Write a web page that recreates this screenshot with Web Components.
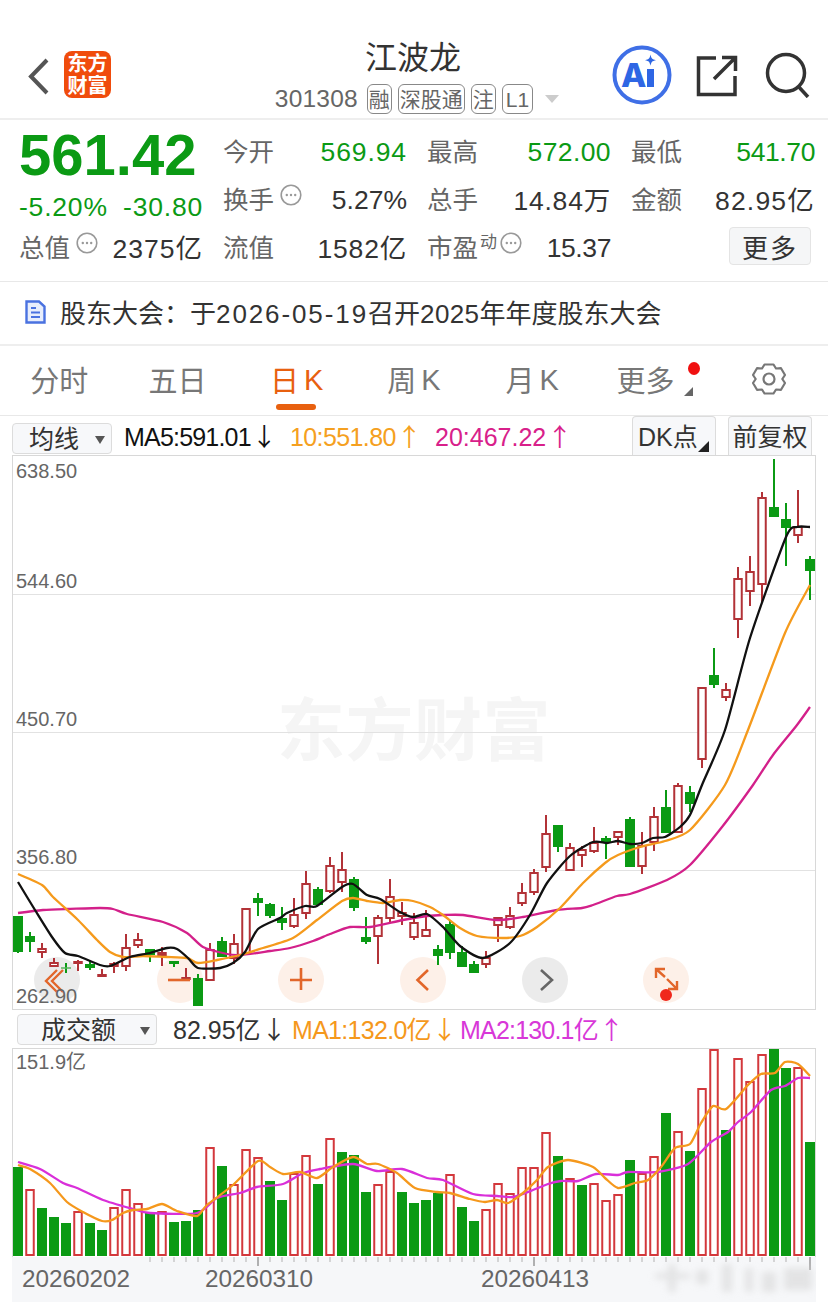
<!DOCTYPE html>
<html lang="zh"><head><meta charset="utf-8"><title>江波龙</title>
<style>
html,body{margin:0;padding:0;background:#fff}
body{width:828px;height:1302px;overflow:hidden;font-family:"Liberation Sans","Noto Sans CJK SC",sans-serif;color:#333}
</style></head><body>
<app-header></app-header>
<quote-panel></quote-panel>
<notice-bar>股东大会：于<b class="d">2026-05-19</b>召开<b class="y">2025</b>年年度股东大会</notice-bar>
<period-tabs></period-tabs>
<ma-bar></ma-bar>
<kline-chart></kline-chart>
<vol-bar></vol-bar>
<vol-chart></vol-chart>
<script>
const FONT='"Liberation Sans","Noto Sans CJK SC",sans-serif';
function def(name,html,init){
  customElements.define(name,class extends HTMLElement{
    constructor(){super();const s=this.attachShadow({mode:'open'});s.innerHTML=html;if(init)init(s,this);}
  });
}
function smooth(p){
  let d='M'+p[0][0]+' '+p[0][1];
  for(let i=0;i<p.length-1;i++){
    const a=p[Math.max(i-1,0)],b=p[i],c=p[i+1],e=p[Math.min(i+2,p.length-1)],k=.12;
    d+=`C${(b[0]+(c[0]-a[0])*k).toFixed(1)} ${(b[1]+(c[1]-a[1])*k).toFixed(1)} ${(c[0]-(e[0]-b[0])*k).toFixed(1)} ${(c[1]-(e[1]-b[1])*k).toFixed(1)} ${c[0]} ${c[1]}`;
  }
  return d;
}
const cx=i=>18+12*i;

def('tag-badge',`<style>:host{display:inline-flex;align-items:center;justify-content:center;box-sizing:border-box;height:30px;padding:0 1px;border:1px solid #888;border-radius:6px;font-size:21px;color:#666;line-height:1;background:#fff}</style><slot></slot>`);

def('app-header',`<style>
:host{display:flex;box-sizing:border-box;height:120px;border-bottom:2px solid #eee;position:relative;font-family:${FONT}}
.left{display:flex;align-items:flex-start;width:270px;padding:51px 0 0 26px;box-sizing:border-box;gap:14px}
.logo{width:47px;height:47px;border-radius:8px;background:#f04c0c;color:#fff;font-weight:700;font-size:20px;line-height:22px;text-align:center;display:flex;align-items:center;justify-content:center}
.mid{width:286px;display:flex;flex-direction:column;align-items:center;padding-top:39px;box-sizing:border-box}
.name{font-size:32px;line-height:38px;color:#333}
.sub{display:flex;align-items:center;gap:6px;margin:7px 0 0 8px;font-size:24.5px;color:#666;white-space:nowrap;height:30px}
.code{margin-right:3px;letter-spacing:.2px}
.tri{width:0;height:0;border-left:7px solid transparent;border-right:7px solid transparent;border-top:8px solid #ccc;margin-left:6px}
.right{flex:1;display:flex;align-items:flex-start;padding:45px 0 0 56px;box-sizing:border-box;gap:0}
</style>
<div class="left">
<svg width="24" height="38" viewBox="0 0 24 38" style="margin-top:6px"><path d="M21 3 5 19.5 21 36" fill="none" stroke="#555" stroke-width="4"/></svg>
<div class="logo">东方<br>财富</div></div>
<div class="mid"><div class="name">江波龙</div>
<div class="sub"><span class="code">301308</span><tag-badge>融</tag-badge><tag-badge>深股通</tag-badge><tag-badge>注</tag-badge><tag-badge style="font-family:'Liberation Sans';padding:0 3px">L1</tag-badge><span class="tri"></span></div></div>
<div class="right">
<svg width="60" height="60" viewBox="0 0 60 60"><circle cx="30" cy="30" r="27.5" fill="#fff" stroke="#3f6fe6" stroke-width="4"/><text x="9" y="42" font-family="Inter,'Liberation Sans'" font-weight="800" font-size="33" fill="#2e66e4">A</text><rect x="35" y="24" width="7" height="18" fill="#2e66e4"/><path d="M38.5 9.500C39.300 13.500 40 14.300 44 15.200 40 16 39.300 16.800 38.500 20.800 37.700 16.800 37 16 33 15.200 37 14.300 37.700 13.500 38.500 9.500Z" fill="#2e66e4"/></svg>
<svg width="42" height="42" viewBox="0 0 42 42" style="margin:10px 0 0 24px"><path d="M20 3H2.500V39.500H39V21" fill="none" stroke="#333" stroke-width="3.500"/><path d="M18 24 38 4M26 2.500H39.500V16" fill="none" stroke="#333" stroke-width="3.500"/></svg>
<svg width="46" height="46" viewBox="0 0 46 46" style="margin:7px 0 0 27px"><circle cx="21" cy="21" r="18.500" fill="none" stroke="#333" stroke-width="3.500"/><path d="M33 34 43 45" stroke="#333" stroke-width="3.500"/></svg>
</div>`);

const info=`<svg class="i" width="22" height="22" viewBox="0 0 22 22"><circle cx="11" cy="11" r="9.800" fill="#fff" stroke="#999" stroke-width="1.600"/><circle cx="6.800" cy="11" r="1.200" fill="#999"/><circle cx="11" cy="11" r="1.200" fill="#999"/><circle cx="15.200" cy="11" r="1.200" fill="#999"/></svg>`;
function cell(lab,val,cls='',ls=0,extra=''){const up=/[万亿]/.test(val)?'position:relative;top:-2px;':'';return `<div class="c"><span class="l">${lab}${extra}</span><span class="v ${cls}" style="${up}letter-spacing:${ls}px">${val}</span></div>`}
def('quote-panel',`<style>
:host{display:grid;box-sizing:border-box;height:162px;border-bottom:1px solid #e8e8e8;padding:8px 0 0 19px;grid-template-columns:184px 184px 184px 184px;column-gap:20px;grid-auto-rows:48px;font-family:${FONT}}
.p{grid-row:1/3;display:flex;flex-direction:column;color:#0b9a14}
.big{font-size:58px;font-weight:700;line-height:54px;white-space:nowrap}
.chg{display:flex;justify-content:space-between;font-size:26.5px;line-height:34px;margin-top:8px;letter-spacing:.8px}
.c{display:flex;justify-content:space-between;align-items:center;white-space:nowrap}
.l{font-size:25.500px;color:#666;display:flex;align-items:center;position:relative;top:-3px}
.v{font-size:26.500px;color:#333}
.g{color:#0b9a14}
.i{margin:-4px 0 0 6px}
.su{font-size:17px;line-height:17px;align-self:flex-start;margin:7px 0 0 2px}
.su + .i{margin-left:3px}
button{font:inherit;font-size:26px;color:#333;width:82px;height:38px;margin:-4px 4px 0 auto;background:#f5f6f7;border:1px solid #e4e4e4;border-radius:4px;letter-spacing:2px;padding:0;display:block}
</style>
<div class="p"><div class="big">561.42</div><div class="chg"><span>-5.20%</span><span>-30.80</span></div></div>
${cell('今开','569.94','g',.9)}${cell('最高','572.00','g',.4)}${cell('最低','541.70','g',-.4)}
${cell('换手','5.27%','',0,info)}${cell('总手','14.84万','',.8)}${cell('金额','82.95亿','',1.2)}
${cell('总值','2375亿','',1,info)}${cell('流值','1582亿','',.8)}${cell('市盈','15.37','',-.4,'<span class="su">动</span>'+info)}
<div class="c"><button>更多</button></div>`);

def('notice-bar',`<style>
:host{display:flex;align-items:center;box-sizing:border-box;height:64px;border-bottom:2px solid #eee;padding:0 0 3px 25px;font-size:26px;color:#333;font-family:${FONT};gap:14px;white-space:nowrap}
::slotted(b){font-weight:400}
::slotted(b.d){letter-spacing:1.9px}
::slotted(b.y){letter-spacing:.4px}
</style>
<svg width="21" height="24" viewBox="0 0 21 24"><path d="M1.500 1.500H14L19.500 6.500V22.500H1.500Z" fill="#e8eefc" stroke="#4a72e0" stroke-width="2.400"/><path d="M6 8H11M6 12.500H15M6 17H15" stroke="#4a72e0" stroke-width="2"/></svg>
<span><slot></slot></span>`);

def('period-tabs',`<style>
:host{display:grid;grid-template-columns:repeat(7,1fr);box-sizing:border-box;height:70px;border-bottom:1px solid #e8e8e8;font-family:${FONT};font-size:29px;color:#777}
.t{display:flex;align-items:center;justify-content:center;position:relative;padding-bottom:3px;white-space:nowrap}
.t b{font-weight:400;margin-left:5px;position:relative;top:1px}
.a{color:#e8600f;left:1px}
.a::after{content:"";position:absolute;left:50%;margin-left:-21px;width:40px;height:6px;top:58px;border-radius:3px;background:#e8600f}
.dot{position:absolute;left:102px;top:16px;width:12px;height:13px;border-radius:50%;background:#f01010}
.cor{position:absolute;left:98px;top:41px;border-left:9px solid transparent;border-bottom:9px solid #666;width:0;height:0}
</style>
<div class="t">分时</div><div class="t">五日</div><div class="t a">日<b>K</b></div><div class="t">周<b>K</b></div><div class="t">月<b>K</b></div>
<div class="t" style="left:-5px">更多<span class="dot"></span><span class="cor"></span></div>
<div class="t"><svg width="34" height="34" viewBox="0 0 34 34"><path d="M12.500 2.500H21.500L24 6.500 29 6.200 33 13 30.300 17 33 21 29 27.800 24 27.500 21.500 31.500H12.500L10 27.500 5 27.800 1 21 3.700 17 1 13 5 6.200 10 6.500Z" fill="none" stroke="#777" stroke-width="2.200" stroke-linejoin="round"/><circle cx="17" cy="17" r="5.500" fill="none" stroke="#777" stroke-width="2.200"/></svg></div>`);

def('pick-box',`<style>
:host{display:flex;align-items:center;box-sizing:border-box;background:#f7f8fa;border:1px solid #dcdcdc;border-radius:4px;font-size:25px;color:#333;position:relative;justify-content:center;white-space:nowrap;padding-bottom:3px}
</style><slot></slot>`);

const AR=`font-family:'Noto Sans CJK SC';font-size:25px;letter-spacing:0`;
def('ma-bar',`<style>
:host{display:flex;align-items:center;box-sizing:border-box;height:39px;font-family:${FONT};font-size:25px;white-space:nowrap;position:relative}
pick-box.s{width:100px;height:31px;margin:5px 12px 0 12px;justify-content:flex-start;padding-left:16px}
.s i{position:absolute;right:6px;top:12px;border-left:5px solid transparent;border-right:5px solid transparent;border-top:8px solid #555}
span{display:block}
.m{color:#111;width:166px;margin-top:-2px;letter-spacing:-.8px}
.o{color:#f5a020;width:145px;margin-top:-2px;letter-spacing:-.6px}
.r{color:#d8208a;margin-top:-2px}
.m u,.o u,.r u{text-decoration:none;${AR};margin-left:1px}
.btn{position:absolute;top:0;height:39px;border-bottom:none;border-radius:4px 4px 0 0}
.c{position:absolute;right:6px;bottom:3px;border-left:11px solid transparent;border-bottom:11px solid #222;width:0;height:0}
</style>
<pick-box class="s">均线<i></i></pick-box>
<span class="m">MA5:591.01<u>↓</u></span><span class="o">10:551.80<u>↑</u></span><span class="r">20:467.22<u>↑</u></span>
<pick-box class="btn" style="left:632px;width:84px;justify-content:flex-start;padding-left:5px">DK点<span class="c"></span></pick-box>
<pick-box class="btn" style="left:728px;width:84px">前复权</pick-box>`);

const K=[[0,'g',916,916,952,953],[1,'g',932,936,942,952],[2,'r',943,948,953,958],[3,'r',958,962,967,967],[4,'g',963,967.5,968.5,973],[5,'r',960,961,964,971],[6,'g',961,964,968,970],[7,'r',969,974,977,977],[8,'r',962,963,967,973],[9,'r',934,947,967,971],[10,'r',933,939,946,948],[11,'g',949,949,955,962],[12,'r',947,952,956,966],[13,'g',961,961,964,967],[14,'r',968,977,980,980],[15,'g',974,978,1006,1006],[16,'r',943,949,981,981],[17,'g',937,941,957,957],[18,'r',934,943,959,964],[19,'r',908,908,955,955],[20,'g',893,898,903,916],[21,'g',903,904,916,918],[22,'g',907,918,923,930],[23,'r',898,914,927,928],[24,'r',871,883,914,919],[25,'g',887,889,905,905],[26,'r',857,865,892,893],[27,'r',852,869,883,892],[28,'g',877,879,908,911],[29,'g',917,937,942,944],[30,'r',915,917,937,964],[31,'r',879,896,919,923],[32,'r',902,912,917,925],[33,'r',913,922,938,940],[34,'r',910,929,937,937],[35,'g',945,949,956,965],[36,'g',920,924,953,959],[37,'g',946,952,967,967],[38,'g',961,964,973,973],[39,'r',951,957,965,968],[40,'r',917,917,926,942],[41,'r',907,915,928,929],[42,'r',883,892,904,906],[43,'r',869,872,893,895],[44,'r',815,833,868,872],[45,'g',825,825,847,852],[46,'r',843,847,871,871],[47,'r',846,849,856,867],[48,'r',827,842,852,853],[49,'g',836,838,842,859],[50,'r',831,831,838,845],[51,'g',817,819,867,867],[52,'r',832,845,867,874],[53,'r',807,816,843,851],[54,'g',790,807,833,833],[55,'r',783,785,833,833],[56,'g',786,792,804,812],[57,'r',687,687,760,768],[58,'g',648,675,685,688],[59,'r',683,689,698,701],[60,'r',567,578,620,638],[61,'r',556,571,592,606],[62,'r',492,497,585,602],[63,'g',459,507,517,517],[64,'g',503,519,528,566],[65,'r',490,526,536,543],[66,'g',556,559,571,600]];
const M5=[[18,882],[35,910],[52,937],[65,953],[78,956],[100,965],[110,966],[130,957],[150,953],[167,948],[177,949],[188,958],[198,968],[220,968],[233,963],[245,952],[258,929],[280,918],[287,913],[305,906],[317,906],[342,887],[353,884],[367,895],[380,899],[400,912],[413,917],[427,914],[443,927],[460,946],[483,958],[510,943],[530,915],[547,883],[570,856],[593,842],[607,843],[618,841],[630,844],[642,843],[653,838],[665,837],[680,827],[690,815],[702,785],[725,730],[750,638],[786,537],[797,527],[810,527]];
const M10=[[18,874],[42,885],[53,897],[78,920],[97,940],[110,952],[123,957],[143,956],[167,957],[187,958],[198,963],[217,960],[240,955],[263,948],[293,938],[317,920],[342,901],[353,898],[367,901],[383,903],[400,900],[413,901],[430,907],[443,915],[460,928],[477,936],[503,938],[520,936],[537,927],[560,908],[583,883],[605,863],[618,855],[640,847],[665,841],[690,830],[725,785],[748,730],[785,633],[810,585]];
const M20=[[18,913],[43,910],[67,909],[100,908],[113,909],[127,914],[163,922],[187,933],[203,947],[227,954],[240,955],[257,953],[270,951],[290,948],[313,941],[330,934],[350,927],[370,927],[403,920],[427,916],[443,915],[463,915],[497,920],[523,917],[557,910],[582,908],[593,905],[617,896],[630,894],[667,880],[690,865],[722,827],[753,785],[773,755],[797,725],[810,707]];
let cs='';
for(const [i,c,w1,t,b,w2] of K){
  const x=cx(i),col=c==='g'?'#0b9a14':'#b23237';
  cs+=`<path d="M${x} ${w1}V${t}M${x} ${b}V${w2}" stroke="${col}" stroke-width="2"/>`;
  if(c==='g')cs+=`<rect x="${x-5}" y="${t}" width="10" height="${b-t}" fill="${col}"/>`;
  else cs+=`<rect x="${x-3.75}" y="${t+1}" width="7.500" height="${b-t-2}" fill="#fff" stroke="${col}" stroke-width="2"/>`;
}
const ln=(p,c)=>`<path d="${smooth(p)}" fill="none" stroke="${c}" stroke-width="2.300" stroke-linejoin="round"/>`;
const O='#e2662a',PE='#fdf0e8',GR='#ebebeb';
const BTNS=[[57,GR,`<path d="M23 13 12 24 23 35M29 13 18 24 29 35" fill="none" stroke="${O}" stroke-width="2.400"/>`],
[180,PE,`<path d="M11 23H33" stroke="${O}" stroke-width="2.600"/>`],
[301,PE,`<path d="M12 23H34M23 11V33" stroke="${O}" stroke-width="2.600"/>`],
[423,PE,`<path d="M28 13 17.500 23 28 33" fill="none" stroke="${O}" stroke-width="2.600"/>`],
[545,GR,`<path d="M19 13 30 23 19 33" fill="none" stroke="#666" stroke-width="2.600"/>`],
[666,PE,`<path d="M13 12 22 20M13 21V12H22M24 22 34 32M34 24V32H25" fill="none" stroke="${O}" stroke-width="2.400"/><circle cx="23" cy="38" r="6" fill="#f0281c"/>`]];
const disc=BTNS.map(b=>`<span class="d" style="left:${b[0]-36}px;background:${b[1]}"></span>`).join('');
const ico=BTNS.map(b=>`<svg class="b" style="left:${b[0]-36}px" width="46" height="46" viewBox="0 0 46 46">${b[2]}</svg>`).join('');
def('kline-chart',`<style>
:host{display:block;box-sizing:border-box;width:804px;height:555px;margin-left:12px;border:1px solid #d8d8d8;position:relative;overflow:hidden;font-family:${FONT}}
svg.m{position:absolute;left:0;top:0;display:block}
.lab{position:absolute;left:3px;font-size:20px;line-height:22px;color:#666}
.wm{position:absolute;left:264px;top:239px;font-size:68px;font-weight:700;line-height:72px;color:#f5f5f5;white-space:nowrap;letter-spacing:.5px}
.b,.d{position:absolute;top:501px}
.b{overflow:visible}
.d{width:46px;height:46px;border-radius:50%}
</style>
<div class="wm">东方财富</div>${disc}
<svg class="m" width="802" height="553" viewBox="13 456 802 553">
<path d="M13 594.500H815M13 732.500H815M13 870.500H815" stroke="#e2e2e2" stroke-width="1"/>
${cs}${ln(M20,'#d3208a')}${ln(M10,'#f59a1c')}${ln(M5,'#111')}</svg>
${ico}
<span class="lab" style="top:4px">638.50</span><span class="lab" style="top:114px">544.60</span><span class="lab" style="top:252px">450.70</span><span class="lab" style="top:390px">356.80</span><span class="lab" style="top:529px">262.90</span>
`);

def('vol-bar',`<style>
:host{display:flex;align-items:center;box-sizing:border-box;height:38px;font-family:${FONT};font-size:25px;white-space:nowrap}
pick-box{width:140px;height:31px;margin:0 16px 0 17px;justify-content:flex-start;padding-left:23px}
i{position:absolute;right:6px;top:12px;border-left:5px solid transparent;border-right:5px solid transparent;border-top:8px solid #555}
span{display:block;margin-top:-2px}
.a{color:#333;width:119px}.b{color:#f5981c;width:168px;letter-spacing:-.7px}.c{color:#d838d8;letter-spacing:-.8px}
u{text-decoration:none;${AR};margin-left:1px}
</style><pick-box>成交额<i></i></pick-box><span class="a">82.95亿<u>↓</u></span><span class="b">MA1:132.0亿<u>↓</u></span><span class="c">MA2:130.1亿<u>↑</u></span>`);

const V=[['g',1167],['r',1189],['g',1208],['g',1217],['g',1223],['r',1211],['g',1223],['g',1230],['r',1207],['r',1189],['r',1203],['g',1213],['r',1211],['g',1222],['g',1221],['g',1210],['r',1147],['g',1166],['r',1184],['r',1149],['r',1157],['g',1181],['g',1200],['r',1173],['r',1155],['g',1184],['r',1138],['g',1152],['g',1155],['g',1192],['r',1184],['r',1171],['g',1192],['g',1203],['g',1200],['g',1193],['r',1174],['g',1207],['g',1221],['r',1209],['r',1183],['r',1193],['r',1167],['r',1167],['r',1132],['g',1156],['r',1178],['g',1185],['r',1183],['r',1200],['r',1194],['g',1160],['r',1173],['r',1156],['g',1113],['r',1131],['g',1151],['r',1088],['r',1049],['g',1130],['r',1058],['r',1081],['r',1054],['g',1049],['g',1068],['r',1067],['g',1142]];
const VA=[[18,1165],[30,1169],[50,1183],[67,1202],[83,1212],[102,1221],[112,1220],[123,1213],[133,1210],[147,1209],[162,1204],[177,1211],[197,1216],[207,1205],[233,1185],[258,1161],[270,1167],[283,1174],[300,1172],[317,1178],[333,1167],[353,1157],[367,1164],[378,1164],[397,1173],[415,1188],[437,1192],[450,1193],[470,1199],[485,1202],[497,1200],[508,1203],[523,1193],[537,1180],[548,1167],[568,1160],[593,1167],[605,1178],[618,1188],[635,1183],[648,1180],[661,1167],[675,1148],[690,1144],[701,1123],[713,1106],[726,1109],[748,1085],[761,1074],[775,1073],[785,1062],[798,1064],[810,1076]];
const VB=[[18,1162],[40,1169],[63,1183],[77,1188],[103,1200],[133,1209],[150,1213],[197,1213],[217,1198],[240,1193],[257,1187],[283,1184],[303,1173],[320,1169],[353,1164],[377,1171],[402,1169],[427,1178],[443,1180],[473,1194],[497,1196],[513,1197],[533,1190],[548,1184],[561,1181],[578,1181],[596,1174],[618,1175],[628,1172],[658,1172],[688,1164],[711,1142],[728,1132],[738,1122],[751,1112],[771,1090],[785,1086],[798,1078],[810,1078]];
let vs='';
V.forEach(([c,t],i)=>{const x=cx(i);
  if(c==='g')vs+=`<rect x="${x-5}" y="${t}" width="10" height="${1256-t}" fill="#0b9a14"/>`;
  else vs+=`<rect x="${x-3.75}" y="${t+1}" width="7.500" height="${1254-t}" fill="#fff" stroke="#d3383c" stroke-width="2"/>`;
});
let ts='';
for(let i=11;i<67;i++){const x=cx(i),big=[20,43,66].includes(i);ts+=`<path d="M${x} 1257V${big?(i==66?1270:1266):1262}" stroke="${big?'#999':'#c8c8c8'}" stroke-width="1.500"/>`}
def('vol-chart',`<style>
:host{display:block;width:804px;height:254px;margin-left:12px;box-sizing:border-box;font-family:${FONT};position:relative;overflow:hidden}
.plot{position:relative;box-sizing:border-box;height:209px;border:1px solid #d8d8d8;border-bottom:none}
.plot svg{position:absolute;left:0;top:0;display:block}
.lab{position:absolute;left:3px;top:1px;font-size:20px;line-height:24px;color:#666}
.foot{position:relative;height:45px;background:#f6f7f9}
.foot span{position:absolute;top:9px;font-size:24.3px;line-height:26px;color:#666}
svg.t,svg.w{position:absolute;left:0;top:0}
</style>
<div class="plot"><svg width="802" height="208" viewBox="13 1049 802 208">${vs}${ln(VB,'#d92fd9')}${ln(VA,'#f5981c')}</svg><span class="lab">151.9亿</span></div>
<div class="foot">
<svg class="t" width="804" height="45" viewBox="12 1257 804 45">${ts}</svg>
<svg class="w" width="804" height="45" viewBox="12 1257 804 45"><defs><filter id="f" x="-30%" y="-80%" width="160%" height="260%"><feGaussianBlur stdDeviation="3.500"/></filter></defs><g filter="url(#f)" fill="#d4d4d4" opacity=".55"><rect x="655" y="1273" width="35" height="6"/><rect x="668" y="1264" width="8" height="28"/><rect x="696" y="1270" width="12" height="14"/><rect x="722" y="1264" width="10" height="28"/><rect x="745" y="1268" width="8" height="24"/><rect x="762" y="1272" width="14" height="20"/><rect x="784" y="1268" width="28" height="22"/></g></svg>
<span style="left:10px">20260202</span><span style="left:193px">20260310</span><span style="left:469px">20260413</span>
</div>`);
</script>
</body></html>
